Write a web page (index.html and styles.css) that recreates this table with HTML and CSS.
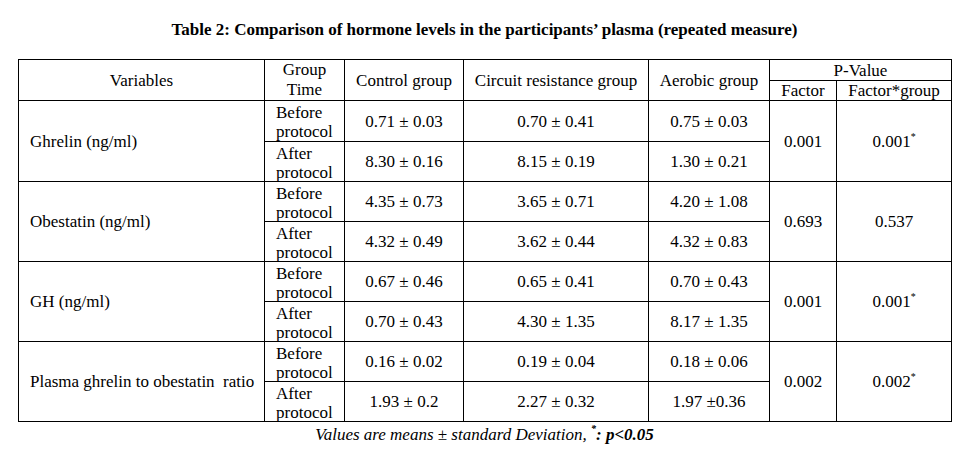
FILE: index.html
```html
<!DOCTYPE html>
<html>
<head>
<meta charset="utf-8">
<link rel="stylesheet" href="styles.css">
</head>
<body>
<div class="page">
  <h1 class="title">Table 2: Comparison of hormone levels in the participants’ plasma (repeated measure)</h1>
  <table class="data">
    <colgroup>
      <col class="c-var"><col class="c-time"><col class="c-ctrl"><col class="c-circ"><col class="c-aer"><col class="c-fac"><col class="c-fg">
    </colgroup>
    <thead>
      <tr class="h1">
        <th rowspan="2">Variables</th>
        <th rowspan="2" class="gt">Group<br>Time</th>
        <th rowspan="2">Control group</th>
        <th rowspan="2">Circuit resistance group</th>
        <th rowspan="2">Aerobic group</th>
        <th colspan="2">P-Value</th>
      </tr>
      <tr class="h2">
        <th>Factor</th>
        <th>Factor*group</th>
      </tr>
    </thead>
    <tbody>
      <tr class="first">
        <td rowspan="2" class="var">Ghrelin (ng/ml)</td>
        <td class="time"><div>Before<br>protocol</div></td>
        <td>0.71 ± 0.03</td><td>0.70 ± 0.41</td><td>0.75 ± 0.03</td>
        <td rowspan="2">0.001</td><td rowspan="2">0.001<sup>*</sup></td>
      </tr>
      <tr>
        <td class="time"><div>After<br>protocol</div></td>
        <td>8.30 ± 0.16</td><td>8.15 ± 0.19</td><td>1.30 ± 0.21</td>
      </tr>
      <tr>
        <td rowspan="2" class="var">Obestatin (ng/ml)</td>
        <td class="time"><div>Before<br>protocol</div></td>
        <td>4.35 ± 0.73</td><td>3.65 ± 0.71</td><td>4.20 ± 1.08</td>
        <td rowspan="2">0.693</td><td rowspan="2">0.537</td>
      </tr>
      <tr>
        <td class="time"><div>After<br>protocol</div></td>
        <td>4.32 ± 0.49</td><td>3.62 ± 0.44</td><td>4.32 ± 0.83</td>
      </tr>
      <tr>
        <td rowspan="2" class="var">GH (ng/ml)</td>
        <td class="time"><div>Before<br>protocol</div></td>
        <td>0.67 ± 0.46</td><td>0.65 ± 0.41</td><td>0.70 ± 0.43</td>
        <td rowspan="2">0.001</td><td rowspan="2">0.001<sup>*</sup></td>
      </tr>
      <tr>
        <td class="time"><div>After<br>protocol</div></td>
        <td>0.70 ± 0.43</td><td>4.30 ± 1.35</td><td>8.17 ± 1.35</td>
      </tr>
      <tr>
        <td rowspan="2" class="var">Plasma ghrelin to obestatin&nbsp; ratio</td>
        <td class="time"><div>Before<br>protocol</div></td>
        <td>0.16 ± 0.02</td><td>0.19 ± 0.04</td><td>0.18 ± 0.06</td>
        <td rowspan="2">0.002</td><td rowspan="2">0.002<sup>*</sup></td>
      </tr>
      <tr>
        <td class="time"><div>After<br>protocol</div></td>
        <td>1.93 ± 0.2</td><td>2.27 ± 0.32</td><td>1.97 ±0.36</td>
      </tr>
    </tbody>
  </table>
  <p class="note">Values are means ± standard Deviation, <b><sup>*</sup>: p&lt;0.05</b></p>
</div>
</body>
</html>
```

FILE: styles.css
```css
html, body {
  margin: 0;
  padding: 0;
  background: #fff;
}
body {
  font-family: "Liberation Serif", "Times New Roman", serif;
  color: #000;
  font-size: 17px;
}
.page {
  width: 933px;
  margin-left: 18px;
  padding-top: 20px;
}
.title {
  margin: 0 0 19px 0;
  font-size: 17px;
  line-height: 20px;
  font-weight: bold;
  text-align: center;
}
.data {
  border-collapse: collapse;
  table-layout: fixed;
  width: 933px;
}
.c-var { width: 246px; }
.c-time { width: 80px; }
.c-ctrl { width: 119px; }
.c-circ { width: 185px; }
.c-aer { width: 121px; }
.c-fac { width: 67px; }
.c-fg { width: 115px; }
.data th, .data td {
  border: 1px solid #000;
  padding: 0;
  font-weight: normal;
  text-align: center;
  vertical-align: middle;
  line-height: 19px;
  white-space: nowrap;
}
.data .h1 th { height: 20px; }
.data .h2 th { height: 19px; }
.data .gt { line-height: 20px; }
.data tbody td { height: 39px; }
.data tbody tr.first td { height: 40px; }
.data td.var {
  text-align: left;
  padding-left: 11px;
}
.data td.time {
  text-align: left;
  vertical-align: top;
  padding-left: 11px;
}
.data td.time div {
  height: 39px;
  padding-top: 2px;
  box-sizing: border-box;
  overflow: visible;
  line-height: 19px;
}
sup {
  font-size: 10px;
  line-height: 0;
  vertical-align: 7px;
}
.note {
  margin: 3px 0 0 0;
  font-style: italic;
  text-align: center;
  font-size: 17px;
  line-height: 20px;
}
.note sup { vertical-align: 8px; }
```
